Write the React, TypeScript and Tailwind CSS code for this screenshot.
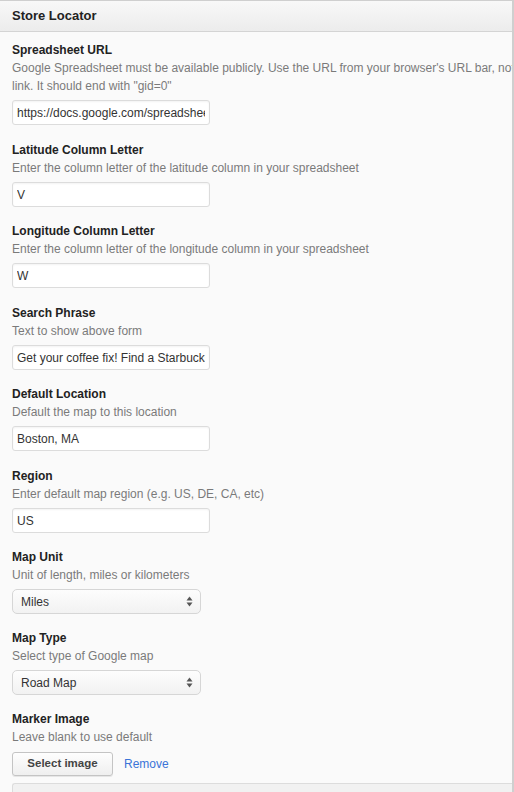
import React from "react";

type Field = {
  label: string;
  desc: string[];
  kind: "text" | "select";
  value: string;
  gap: string;
};

const fields: Field[] = [
  {
    label: "Spreadsheet URL",
    desc: [
      "Google Spreadsheet must be available publicly. Use the URL from your browser's URL bar, not the share",
      'link. It should end with "gid=0"',
    ],
    kind: "text",
    value: "https://docs.google.com/spreadsheets/d/1xYz/edit#gid=0",
    gap: "mb-[16px]",
  },
  {
    label: "Latitude Column Letter",
    desc: ["Enter the column letter of the latitude column in your spreadsheet"],
    kind: "text",
    value: "V",
    gap: "mb-[15px]",
  },
  {
    label: "Longitude Column Letter",
    desc: ["Enter the column letter of the longitude column in your spreadsheet"],
    kind: "text",
    value: "W",
    gap: "mb-[16px]",
  },
  {
    label: "Search Phrase",
    desc: ["Text to show above form"],
    kind: "text",
    value: "Get your coffee fix! Find a Starbucks near you",
    gap: "mb-[15px]",
  },
  {
    label: "Default Location",
    desc: ["Default the map to this location"],
    kind: "text",
    value: "Boston, MA",
    gap: "mb-[16px]",
  },
  {
    label: "Region",
    desc: ["Enter default map region (e.g. US, DE, CA, etc)"],
    kind: "text",
    value: "US",
    gap: "mb-[15px]",
  },
  {
    label: "Map Unit",
    desc: ["Unit of length, miles or kilometers"],
    kind: "select",
    value: "Miles",
    gap: "mb-[15px]",
  },
  {
    label: "Map Type",
    desc: ["Select type of Google map"],
    kind: "select",
    value: "Road Map",
    gap: "mb-[15px]",
  },
];

const font = '"Liberation Sans", Arial, sans-serif';

function SelectArrows() {
  return (
    <svg width="7" height="11" viewBox="0 0 7 11" className="shrink-0">
      <path d="M3.5 0.5 L6.5 4.5 L0.5 4.5 Z" fill="#555" />
      <path d="M3.5 10.5 L6.5 6.5 L0.5 6.5 Z" fill="#555" />
    </svg>
  );
}

export default function App() {
  return (
    <div
      className="w-[514px] h-[792px] overflow-hidden bg-white text-[12px] text-[#333]"
      style={{ fontFamily: font }}
    >
      <div className="w-[514px] min-h-[792px] border-t border-r-2 border-[#cfcfcf] bg-[#fafafa] overflow-hidden">
        <div className="h-[31px] border-b border-[#d4d4d4] bg-gradient-to-b from-[#f8f8f8] to-[#ececec] px-[12px] flex items-center">
          <span className="font-bold text-[13px] text-[#222]">Store Locator</span>
        </div>

        <div className="pl-[12px] pt-[9px]">
          {fields.map((f) => (
            <div key={f.label} className={f.gap}>
              <div className="font-bold leading-[18px] text-[#222]">{f.label}</div>
              {f.desc.map((line) => (
                <div key={line} className="leading-[18px] text-[#7a7a7a] whitespace-nowrap">
                  {line}
                </div>
              ))}
              {f.kind === "text" ? (
                <input
                  readOnly
                  value={f.value}
                  className="mt-[5px] block w-[198px] h-[25px] px-[4px] border border-[#dcdcdc] rounded-[3px] bg-white text-[12px] text-[#333] outline-none shadow-[inset_0_1px_2px_rgba(0,0,0,0.05)]"
                  style={{ fontFamily: font }}
                />
              ) : (
                <div className="mt-[5px] w-[189px] h-[25px] pl-[8px] pr-[7px] flex items-center justify-between border border-[#d6d6d6] rounded-[5px] bg-gradient-to-b from-[#fdfdfd] to-[#f2f2f2] text-[#333]">
                  <span>{f.value}</span>
                  <SelectArrows />
                </div>
              )}
            </div>
          ))}

          <div>
            <div className="font-bold leading-[18px] text-[#222]">Marker Image</div>
            <div className="leading-[18px] text-[#7a7a7a]">Leave blank to use default</div>
            <div className="mt-[6px] flex items-center gap-[11px]">
              <button
                className="w-[101px] h-[24px] border border-[#c4c4c4] rounded-[3px] bg-gradient-to-b from-[#fefefe] to-[#efefef] shadow-[0_1px_0_rgba(0,0,0,0.08)] text-[11.5px] font-bold text-[#444]"
                style={{ fontFamily: font }}
              >
                Select image
              </button>
              <span className="text-[12px] text-[#3b74d8]">Remove</span>
            </div>
            <div className="mt-[7px] h-[40px] border-t border-l border-[#dcdcdc] rounded-tl-[3px] bg-[#f1f1f1]" />
          </div>
        </div>
      </div>
    </div>
  );
}
